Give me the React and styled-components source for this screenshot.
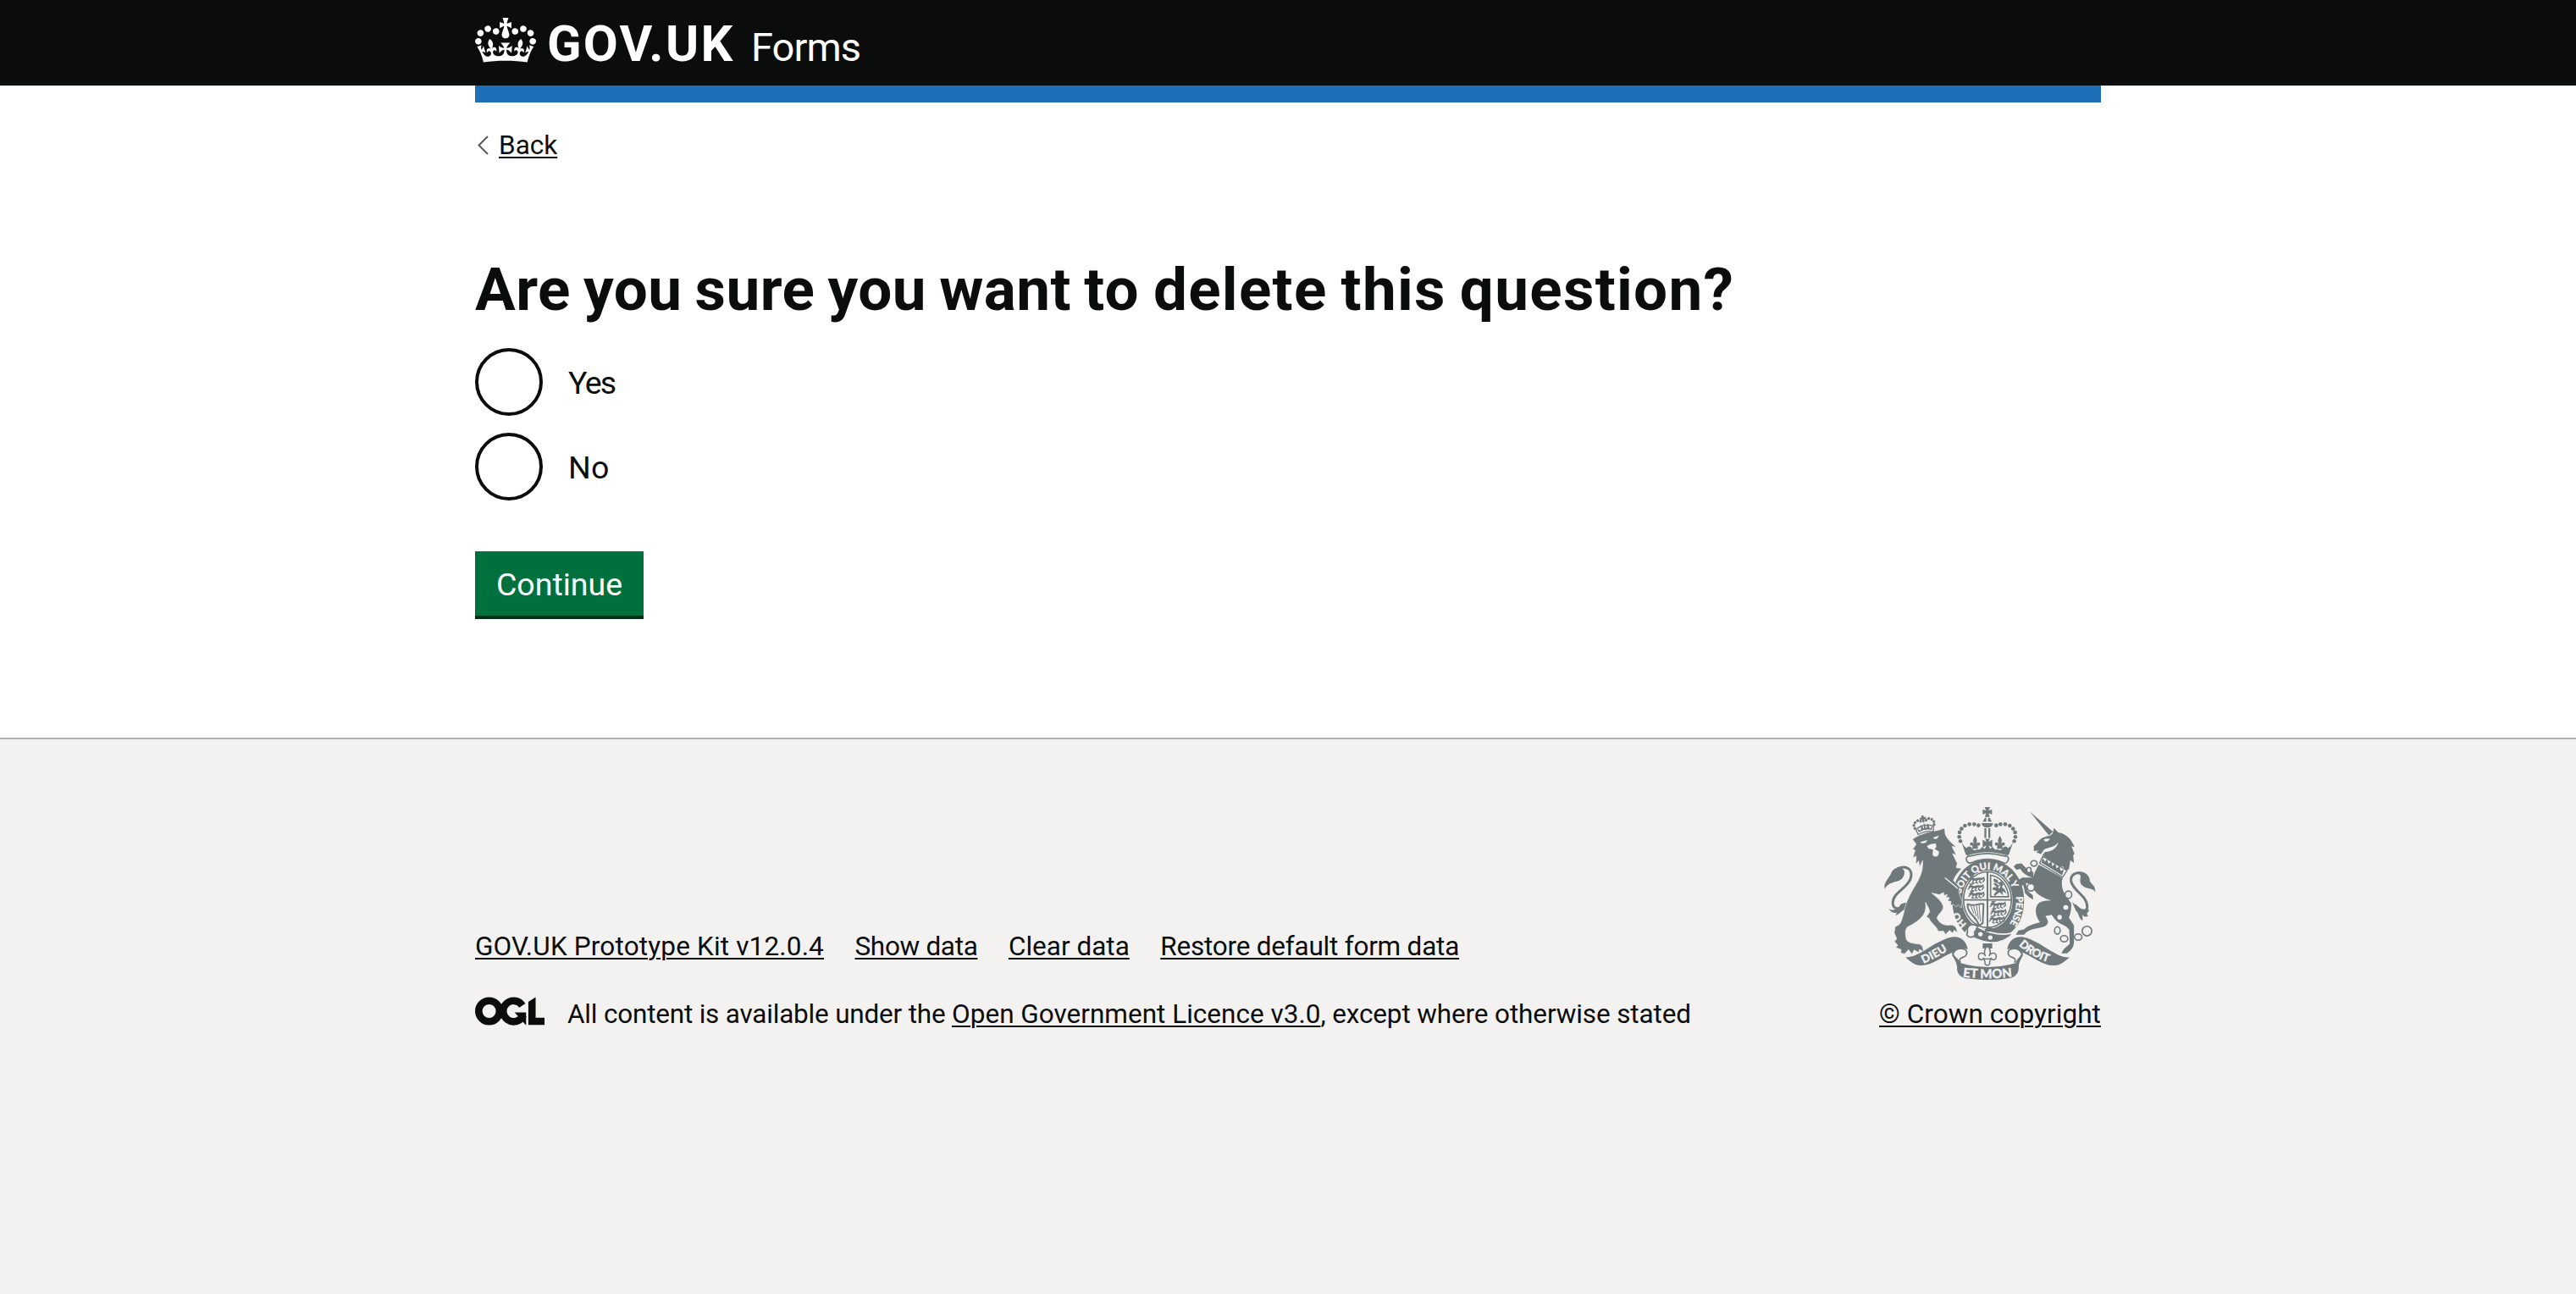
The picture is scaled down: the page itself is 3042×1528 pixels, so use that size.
import React from "react";
import styled, { createGlobalStyle } from "styled-components";

const ink = "#0b0c0c";
const paper = "#f3f2f1";
const crestGrey = "#6f797c";

const GlobalStyle = createGlobalStyle`
  html, body { margin: 0; padding: 0; }
  body {
    background: ${paper};
    color: ${ink};
    font-family: Roboto, "Liberation Sans", sans-serif;
    -webkit-font-smoothing: antialiased;
  }
  *, *::before, *::after { box-sizing: border-box; }
`;

const Page = styled.div`
  display: flex;
  flex-direction: column;
  min-height: 1528px;
`;

const Container = styled.div`
  width: 1920px;
  margin: 0 auto;
`;

const Header = styled.header`
  background: ${ink};
  height: 101px;
`;

const HeaderRow = styled(Container)`
  display: flex;
  align-items: flex-start;
  padding-top: 21px;
  color: #fff;
`;

const HomeLink = styled.a`
  display: flex;
  align-items: flex-start;
  gap: 13px;
  width: 326px;
  color: inherit;
  text-decoration: none;
`;

const Crown = styled.svg`
  display: block;
  width: 72px;
  height: 53px;
`;

const LogoText = styled.span`
  font-size: 59.5px;
  font-weight: 700;
  line-height: 62px;
  letter-spacing: 2.3px;
`;

const ServiceName = styled.span`
  font-size: 47px;
  line-height: 70px;
  letter-spacing: -0.9px;
`;

const PhaseBar = styled(Container)`
  height: 20px;
  background: #1d70b8;
`;

const Body = styled.div`
  background: #fff;
  height: 770px;
`;

const Link = styled.a`
  color: ${ink};
  text-decoration: underline;
  text-decoration-thickness: 2px;
  text-underline-offset: 3px;
  letter-spacing: ${(p) => p.$track || 0}px;
`;

const BackRow = styled.nav`
  display: flex;
  align-items: center;
  gap: 12px;
  padding: 31px 0 0 2px;
  font-size: 31.5px;
  line-height: 40px;
`;

const Chevron = styled.svg`
  display: block;
  width: 14px;
  height: 24px;
`;

const Title = styled.h1`
  margin: 112px 0 31px;
  font-size: 71px;
  font-weight: 700;
  line-height: 76px;
  word-spacing: -3px;
`;

const Radios = styled.div`
  display: flex;
  flex-direction: column;
  gap: 20px;
`;

const RadioRow = styled.label`
  display: flex;
  gap: 30px;
  height: 80px;
`;

const RadioInput = styled.input`
  appearance: none;
  margin: 0;
  width: 80px;
  height: 80px;
  border: 4px solid ${ink};
  border-radius: 50%;
  background: #fff;
`;

const RadioText = styled.span`
  padding-top: 1px;
  font-size: 37.5px;
  line-height: 80px;
  letter-spacing: ${(p) => p.$track || 0}px;
`;

const Button = styled.button`
  display: block;
  width: 199px;
  height: 76px;
  margin: 60px 0 0;
  padding: 2px 0 0;
  border: 0;
  background: #00703c;
  box-shadow: 0 4px 0 #002d18;
  color: #fff;
  font: 400 37.5px/74px Roboto, "Liberation Sans", sans-serif;
`;

const Footer = styled.footer`
  flex: 1;
  border-top: 2px solid #b1b4b6;
  background: ${paper};
  font-size: 31.5px;
  line-height: 40px;
`;

const FooterRow = styled(Container)`
  display: flex;
  justify-content: space-between;
  align-items: flex-end;
  padding-top: 80px;
`;

const FooterMeta = styled.div`
  display: flex;
  flex-direction: column;
  gap: 40px;
`;

const FooterLinks = styled.nav`
  display: flex;
  gap: 36.5px;
`;

const Licence = styled.div`
  display: flex;
  gap: 27px;
  height: 40px;
  white-space: nowrap;
`;

const LicenceMark = styled.svg`
  display: block;
  width: 82px;
  height: 34px;
  margin-top: -1px;
`;

const Tracked = styled.span`
  letter-spacing: ${(p) => p.$track}px;
`;

const CopyrightBlock = styled.div`
  display: flex;
  flex-direction: column;
  align-items: center;
  gap: 21px;
  width: 262px;
  white-space: nowrap;
`;

const Crest = styled.svg`
  display: block;
  width: 250px;
  height: 204px;
`;

const Motto = styled.text`
  font-family: Lato, "Open Sans", sans-serif;
  font-weight: 900;
  font-size: ${(p) => p.$size}px;
  letter-spacing: ${(p) => p.$track || 0}px;
  fill: ${paper};
  stroke: ${paper};
  stroke-width: 0.8px;
`;

function CrownMark() {
  return (
    <Crown viewBox="0 0 132 97" aria-hidden="true">
      <path
        fill="currentColor"
        fillRule="evenodd"
        d="M25 30.2c3.5 1.5 7.7-.2 9.1-3.7 1.5-3.6-.2-7.8-3.9-9.2-3.6-1.4-7.6.3-9.1 3.9-1.4 3.5.3 7.5 3.9 9zM9 39.5c3.6 1.5 7.8-.2 9.2-3.7 1.5-3.6-.2-7.8-3.9-9.1-3.6-1.5-7.6.2-9.1 3.8-1.4 3.5.3 7.5 3.8 9zM4.4 57.2c3.5 1.5 7.7-.2 9.1-3.8 1.5-3.6-.2-7.7-3.9-9.1-3.5-1.5-7.6.3-9.1 3.8-1.4 3.5.3 7.6 3.9 9.1zm38.3-21.4c3.5 1.5 7.7-.2 9.1-3.8 1.5-3.6-.2-7.7-3.9-9.1-3.6-1.5-7.6.3-9.1 3.8-1.3 3.6.4 7.7 3.9 9.1zm64.4-5.6c-3.6 1.5-7.8-.2-9.1-3.7-1.5-3.6.2-7.8 3.8-9.2 3.6-1.4 7.7.3 9.2 3.9 1.3 3.5-.4 7.5-3.9 9zm15.9 9.3c-3.6 1.5-7.7-.2-9.1-3.7-1.5-3.6.2-7.8 3.7-9.1 3.6-1.5 7.7.2 9.2 3.8 1.5 3.5-.3 7.5-3.8 9zm4.7 17.7c-3.6 1.5-7.8-.2-9.2-3.8-1.5-3.6.2-7.7 3.9-9.1 3.6-1.5 7.7.3 9.2 3.8 1.3 3.5-.4 7.6-3.9 9.1zM89.3 35.8c-3.6 1.5-7.8-.2-9.2-3.8-1.4-3.6.2-7.7 3.9-9.1 3.6-1.5 7.7.3 9.2 3.8 1.4 3.6-.3 7.7-3.9 9.1zM69.7 17.7l8.9 4.7V9.3l-8.9 2.8c-.2-.3-.5-.6-.9-.9L72.4 0H59.6l3.5 11.2c-.3.3-.6.5-.9.9l-8.8-2.8v13.1l8.8-4.7c.3.3.6.7.9.9l-5 15.4v.1c-.2.8-.4 1.6-.4 2.4 0 4.1 3.1 7.5 7 8.1h.2c.3 0 .7.1 1 .1.4 0 .7 0 1-.1h.2c4-.6 7.1-4.1 7.1-8.1 0-.8-.1-1.7-.4-2.4V34l-5.1-15.4c.4-.2.7-.6 1-.9zM66 92.8c16.9 0 32.8 1.1 47.1 3.2 4-16.9 8.9-26.7 14-33.5l-9.6-3.4c1 4.9 1.1 7.2 0 10.2-1.5-1.4-3-4.3-4.2-8.7L108.6 76c2.8-2 5-3.2 7.5-3.3-4.4 9.4-10 11.9-13.6 11.2-4.3-.8-6.3-4.6-5.6-7.9 1-4.7 5.7-5.9 8-.5 4.3-8.7-3-11.4-7.6-8.8 7.1-7.2 7.9-13.5 2.1-21.1-8 6.1-8.1 12.3-4.5 20.8-4.7-5.4-12.1-2.5-9.5 6.2 3.4-5.2 7.9-2 7.2 3.1-.6 4.3-6.4 7.8-13.5 7.2-10.3-.9-10.9-8-11.2-13.8 2.5-.5 7.1 1.8 11 7.3L80.2 60c-4.1 4.4-8 5.3-12.3 5.4 1.4-4.4 8-11.6 8-11.6H55.5s6.4 7.2 7.9 11.6c-4.2-.1-8-1-12.3-5.4l1.4 16.4c3.9-5.5 8.5-7.7 10.9-7.3-.3 5.8-.9 12.8-11.1 13.8-7.2.6-12.9-2.9-13.5-7.2-.7-5 3.8-8.3 7.1-3.1 2.7-8.7-4.6-11.6-9.4-6.2 3.7-8.5 3.6-14.7-4.6-20.8-5.8 7.6-5 13.9 2.2 21.1-4.7-2.6-11.9.1-7.7 8.8 2.3-5.5 7.1-4.2 8.1.5.7 3.3-1.3 7.1-5.7 7.9-3.5.7-9-1.8-13.5-11.2 2.5.1 4.7 1.3 7.5 3.3l-4.7-15.4c-1.2 4.4-2.7 7.2-4.3 8.7-1.1-3-.9-5.3 0-10.2l-9.5 3.4c5 6.9 9.9 16.7 14 33.5 14.8-2.1 30.8-3.2 47.7-3.2z"
      />
    </Crown>
  );
}

/* Ring, open ring with a spur, and a slanted corner block. */
function OglMark() {
  return (
    <LicenceMark viewBox="0 0 483.2 195.7" role="img" aria-label="OGL">
      <g fill="none" stroke={ink} strokeWidth="50.7">
        <circle cx="97.8" cy="97.8" r="72.4" />
        <path d="M329 59A72.4 72.4 0 1 0 335 126" />
      </g>
      <g fill={ink}>
        <polygon points="275,106 355,106 355,193.600 352,193.600 299,133" />
        <polygon points="370.800,32.400 421.500,0 421.500,143 483.200,143 483.200,193.600 370.800,193.600" />
      </g>
    </LicenceMark>
  );
}

const archPearls = [
  [472, 133], [487, 129], [504, 129], [520, 134], [532, 145], [539, 158], [540, 174], [536, 189],
];

const lionCrownPearls = [
  [182, 137], [181, 126], [187, 117], [197, 112], [207, 116],
  [252, 137], [253, 126], [247, 117], [237, 112], [227, 116],
];

const Fleur = ({ x, y }) => (
  <path
    transform={`translate(${x} ${y})`}
    d="M0-24C7-14 9-6 4 5C8-2 17-3 18 5C18 11 12 13 9 9L10 22H-10L-9 9C-12 13-18 11-18 5C-17-3-8-2-4 5C-9-6-7-14 0-24Z"
  />
);

const Passant = ({ x, y }) => (
  <g transform={`translate(${x} ${y})`} fill="none" stroke={crestGrey} strokeLinecap="round">
    <path strokeWidth="8" d="M-22-4C-15-8-12 1-4-2S8-7 18-4" />
    <path
      strokeWidth="4.500"
      d="M-20-3L-27 5M-12 0L-15 10L-10 11M2-2L-3 9L3 11M12-4L9 6L16 10M18-4L25-9L27 0L22 6M-12-3L-20-12L-10-13"
    />
  </g>
);

function RoyalCrest() {
  return (
    <Crest viewBox="75 68 750 613" fill={crestGrey} role="img" aria-label="Royal coat of arms">
      <defs>
        <path id="garterTop" d="M347 376A97 114 0 0 1 538 397L538 420" />
        <path id="garterSide" d="M540 372C552 425 530 480 492 516" />
        <path id="garterLow" d="M368 484C350 468 338 449 332 420" />
        <path id="scrollLeft" d="M214 624Q270 600 322 560" />
        <path id="scrollRight" d="M552 558Q600 604 672 624" />
        <path id="scrollMid" d="M353 670Q440 682 540 669" />
      </defs>

      {/* imperial crown */}
      <path d="M431 68H450L445 81L457 76V94L445 90L449 103H432L436 90L424 94V76L436 81Z" />
      <path d="M424 120L432 106H437V120ZM443 106H449L457 120H443ZM420 125H461C459 136 451 141 441 141C430 141 422 136 420 125Z" />
      <path d="M430 143H437V178H430ZM444 143H451V178H444Z" />
      {archPearls.map(([x, y]) => (
        <g key={x}>
          <circle cx={x} cy={y} r="7" />
          <circle cx={881 - x} cy={y} r="7" />
        </g>
      ))}
      <path d="M349 193Q356 207 367 214Q374 203 385 212Q390 226 404 218Q417 221 420 210L432 216L437 204L424 212V184L437 192L433 181H449L445 192L458 184V212L445 204L450 216L461 210Q464 221 477 218Q491 226 496 212Q507 203 514 214Q525 207 532 193L517 236L511 240Q441 216 370 240L364 236Z" />
      <Fleur x={397} y={194} />
      <Fleur x={485} y={194} />
      <path
        d="M380 242C420 230 462 230 502 242C514 240 520 250 512 261C508 270 500 267 494 264C460 250 421 250 388 264C382 267 374 270 369 261C362 250 368 240 380 242Z"
        fill={paper}
        stroke={crestGrey}
        strokeWidth="5"
      />

      {/* garter ring */}
      <path
        fillRule="evenodd"
        d="M442 254C514 254 571 316 571 397C571 455 552 497 511 522L455 548C372 545 316 488 316 397C316 316 370 254 442 254ZM441 293C391 293 352 338 352 397C352 456 391 501 441 501C491 501 530 456 530 397C530 338 491 293 441 293Z"
      />
      <ellipse cx="441" cy="397" rx="85" ry="99" fill="none" stroke={crestGrey} strokeWidth="5" />
      <path d="M438 297H444V500H438ZM354 395H527V400H354Z" />
      <Motto $size={34}><textPath href="#garterTop">SOIT QUI MAL Y</textPath></Motto>
      <Motto $size={34} $track={-1}><textPath href="#garterSide" startOffset="14">PENSE</textPath></Motto>
      <Motto $size={35}><textPath href="#garterLow">HO</textPath></Motto>

      {/* quarters */}
      <Passant x={403} y={327} />
      <Passant x={400} y={354} />
      <Passant x={402} y={380} />
      <Passant x={478} y={416} />
      <Passant x={480} y={442} />
      <Passant x={475} y={468} />
      <path d="M452 310C488 315 511 345 516 386H452Z" fill="none" stroke={crestGrey} strokeWidth="5" />
      <path
        d="M462 322L476 326L480 336L490 332L498 342L492 352L502 360L508 375L494 366L496 381L484 370L466 384L464 377L474 366L458 360L462 353L474 352L462 340L470 337L480 346L486 343L474 337L464 334Z"
      />
      <path d="M478 351L488 345L483 359Z" fill={paper} />
      <g fill="none" stroke={crestGrey}>
        <path strokeWidth="6" d="M370 411C391 425 407 408 427 412L424 480L411 488C398 450 370 450 370 411" />
        <path strokeWidth="3" d="M382 418L392 445M392 419L401 456M402 416L409 466M411 413L416 474" />
      </g>

      {/* buckle and strap end */}
      <path
        d="M364 512L384 486L412 496C452 518 492 525 536 514C517 535 485 552 451 549C415 545 387 533 364 512Z"
        stroke={paper}
        strokeWidth="5"
      />
      <path
        d="M370 500C374 483 393 481 407 492C399 499 403 506 395 511C399 520 394 530 385 529C376 532 363 523 370 514Z"
        fill={paper}
        stroke={crestGrey}
        strokeWidth="5"
      />
      <circle cx="416" cy="519" r="8" fill={paper} />
      <circle cx="451" cy="531" r="8" fill={paper} />
      <path d="M439 490L462 499L456 510H430Z" />

      {/* lion */}
      <g>
        <path fill="none" stroke={crestGrey} strokeWidth="9" d="M121 287C155 271 178 291 168 322C156 358 105 370 105 409C106 430 127 436 152 415" />
        <path d="M76 359C72 333 91 323 99 303C107 282 131 276 145 292C151 309 137 330 119 332C101 337 86 341 76 359Z" />
        <path d="M91 428C102 440 124 430 135 411L158 405L151 430C138 433 132 447 115 453L119 443C104 445 96 439 91 428Z" />
        <path
          stroke={paper}
          strokeWidth="2"
          d="M175 182C198 165 230 155 265 151L289 143L291 163C297 181 313 196 331 210L315 208L331 239L317 233L334 268L330 283L350 286C337 299 326 312 320 329L343 352C334 372 347 390 352 403L348 426L337 415L329 422L322 414L309 416L312 403L300 401L306 389L293 389L299 378L287 382L285 371L270 379L243 373C266 392 279 403 284 420C286 438 264 447 262 463C271 480 284 487 302 487C321 484 332 490 334 513L322 505L319 516L306 506L292 520L285 508L266 509C262 491 238 479 233 462L224 458L236 440C234 426 225 414 221 406C228 446 205 470 158 493C145 505 151 526 154 540C164 551 181 552 198 554C208 556 214 566 213 582L200 573L197 584L181 575L173 590L161 574L147 589L133 586L135 574L115 566L123 559L111 545L119 535L110 515L113 493C124 486 130 487 134 475C147 443 144 425 162 388C184 340 214 316 211 258L200 281L197 259L187 271L188 242L176 248L184 221L176 217L188 200Z"
        />
        <path fill="none" stroke={paper} strokeWidth="4" d="M290 319L336 357" />
        <g fill={paper}>
          <path d="M202 192L228 185C225 196 212 201 202 192ZM247 177L268 169C266 181 256 185 247 177Z" />
          <path d="M226 206Q241 196 257 197L260 209L254 217L268 225C273 245 248 251 246 235L248 219L232 215Z" />
        </g>
        <g transform="rotate(-11 217 135)">
          <path d="M185 142Q217 124 249 142L244 161Q217 151 190 161Z" fill={paper} stroke={crestGrey} strokeWidth="4" />
          <path d="M194 153L190 140L202 149L206 128L214 146L217 121L222 146L230 128L235 149L246 140L240 154Q217 144 194 153Z" />
          <path d="M213 97H221V104H228V111H221V121H213V111H206V104H213Z" />
          {lionCrownPearls.map(([x, y]) => (
            <circle key={`${x}-${y}`} cx={x} cy={y} r="5" />
          ))}
        </g>
      </g>

      {/* unicorn */}
      <g>
        <path d="M591 84L673 155L659 169Z" />
        <path d="M661 170L672 162L677 142L692 158C722 163 738 181 750 210L739 207L750 234L745 239L748 266L735 257L730 289L719 292L708 278L697 283L636 239L645 227C671 227 689 211 692 191C682 214 651 209 641 220L631 235L614 229L623 222L606 224L605 207L617 196C626 180 642 172 661 170Z" />
        <path d="M640 183Q650 178 663 181Q657 192 645 190Z" fill={paper} />
        <path d="M637 243L723 293L708 317L626 267Z" fill={paper} stroke={crestGrey} strokeWidth="4" />
        <path d="M632 265L637 248L645 262L653 252L657 269L668 260L671 278L682 268L686 286L697 277L700 294L712 290L706 310Z" />
        <path d="M623 272L708 320C702 337 705 360 717 379L738 410C740 427 735 450 730 460L748 488L748 548C747 569 734 578 724 587H703L712 572L733 553L731 503C712 478 692 490 669 450L646 455C657 470 661 482 645 491C614 502 587 499 571 521H541L551 506L571 502C585 488 606 483 628 477C616 462 608 440 615 420C623 401 643 400 667 399C632 390 602 369 599 342C600 315 611 295 623 272Z" />
        <path d="M604 299L585 292L562 268L543 270L534 279L544 291L557 287C566 300 577 312 602 318L565 318L549 327L555 344L569 347L574 373L588 387L603 396L602 381L583 365L577 338L603 342Z" />
        <path fill="none" stroke={crestGrey} strokeWidth="9" d="M779 307C758 294 733 308 738 333C747 369 797 382 795 425C793 438 776 443 751 416" />
        <path d="M760 298C785 292 805 312 804 330C809 342 824 344 824 370C813 352 794 362 778 347C765 337 772 323 771 311Z" />
        <path d="M741 404L769 431L802 432C797 445 788 446 800 454C785 461 780 454 778 448L779 471C764 465 767 445 755 436Z" />
        <g fill={paper}>
          <ellipse cx="719" cy="424" rx="9" ry="8" />
          <ellipse cx="697" cy="459" rx="8" ry="9" />
        </g>
        <g fill={paper} stroke={crestGrey} strokeWidth="5">
          <ellipse cx="606" cy="268" rx="11" ry="10" />
          <ellipse cx="588" cy="292" rx="8" ry="10" />
          <ellipse cx="595" cy="353" rx="13" ry="13" />
          <ellipse cx="728" cy="379" rx="12" ry="13" />
          <ellipse cx="689" cy="506" rx="10" ry="13" />
          <ellipse cx="713" cy="535" rx="13" ry="11" />
          <ellipse cx="763" cy="529" rx="13" ry="11" />
          <circle cx="794" cy="508" r="17" />
        </g>
      </g>

      {/* fleur-de-lis badge */}
      <path d="M424 552H458V570H449L441 559L433 570H424Z" />
      <g fill={paper} stroke={crestGrey} strokeWidth="4.500">
        <path d="M441 560C452 573 454 584 447 597C453 582 474 582 472 601C470 612 455 613 454 603C451 611 447 617 449 624Q441 636 432 624C434 617 430 611 427 603C426 613 410 612 409 601C408 582 428 582 434 597C427 584 429 573 441 560Z" />
        <path d="M424 607H458" />
      </g>

      {/* scroll */}
      <path d="M150 601C200 604 250 543 314 529C344 524 367 543 371 573C353 568 338 569 326 580C279 596 240 637 195 629C176 625 164 612 150 601Z" />
      <path d="M732 601C682 604 632 543 568 529C538 524 515 543 511 573C529 568 544 569 556 580C603 596 642 637 687 629C706 625 718 612 732 601Z" />
      <path d="M318 579C308 596 334 612 333 638C332 663 350 672 363 676Q441 686 519 676C536 672 551 662 552 638C550 612 574 596 564 579C566 594 545 604 541 622Q441 650 346 622C338 604 316 594 318 579Z" />
      <g fill="none" stroke={crestGrey} strokeWidth="5">
        <path d="M318 598C319 573 340 566 360 573C372 579 370 596 354 601C342 605 338 612 346 620" />
        <path d="M564 598C563 573 542 566 522 573C510 579 512 596 528 601C540 605 544 612 536 620" />
      </g>
      <Motto $size={40} $track={1}><textPath href="#scrollLeft">DIEU</textPath></Motto>
      <Motto $size={40} $track={-1}><textPath href="#scrollRight">DROIT</textPath></Motto>
      <Motto $size={45}><textPath href="#scrollMid">ET MON</textPath></Motto>
    </Crest>
  );
}

const options = [
  { label: "Yes", track: -1.7 },
  { label: "No", track: 0.3 },
];

const footerLinks = [
  { label: "GOV.UK Prototype Kit v12.0.4", track: 0.16 },
  { label: "Show data", track: -0.32 },
  { label: "Clear data", track: 0 },
  { label: "Restore default form data", track: -0.22 },
];

export default function App() {
  return (
    <Page>
      <GlobalStyle />
      <Header>
        <HeaderRow>
          <HomeLink>
            <CrownMark />
            <LogoText>GOV.UK</LogoText>
          </HomeLink>
          <ServiceName>Forms</ServiceName>
        </HeaderRow>
      </Header>
      <Body>
        <PhaseBar />
        <Container>
          <BackRow>
            <Chevron viewBox="0 0 14 24" aria-hidden="true">
              <path d="M13 1L2.500 11.500L13 22" fill="none" stroke="#505a5f" strokeWidth="2" />
            </Chevron>
            <Link>Back</Link>
          </BackRow>
          <Title>
            <Tracked $track={0.48}>Are you sure you want </Tracked>
            <Tracked $track={1.31}>to delete this question?</Tracked>
          </Title>
          <Radios>
            {options.map((o) => (
              <RadioRow key={o.label}>
                <RadioInput type="radio" name="confirm" />
                <RadioText $track={o.track}>{o.label}</RadioText>
              </RadioRow>
            ))}
          </Radios>
          <Button type="button">Continue</Button>
        </Container>
      </Body>
      <Footer>
        <FooterRow>
          <FooterMeta>
            <FooterLinks>
              {footerLinks.map((l) => (
                <Link key={l.label} $track={l.track}>{l.label}</Link>
              ))}
            </FooterLinks>
            <Licence>
              <OglMark />
              <span>
                <Tracked $track={-0.2}>All content is available under the </Tracked>
                <Link>Open Government Licence v3.0</Link>
                <Tracked $track={-0.13}>, except where otherwise stated</Tracked>
              </span>
            </Licence>
          </FooterMeta>
          <CopyrightBlock>
            <RoyalCrest />
            <Link $track={0.06}>© Crown copyright</Link>
          </CopyrightBlock>
        </FooterRow>
      </Footer>
    </Page>
  );
}
